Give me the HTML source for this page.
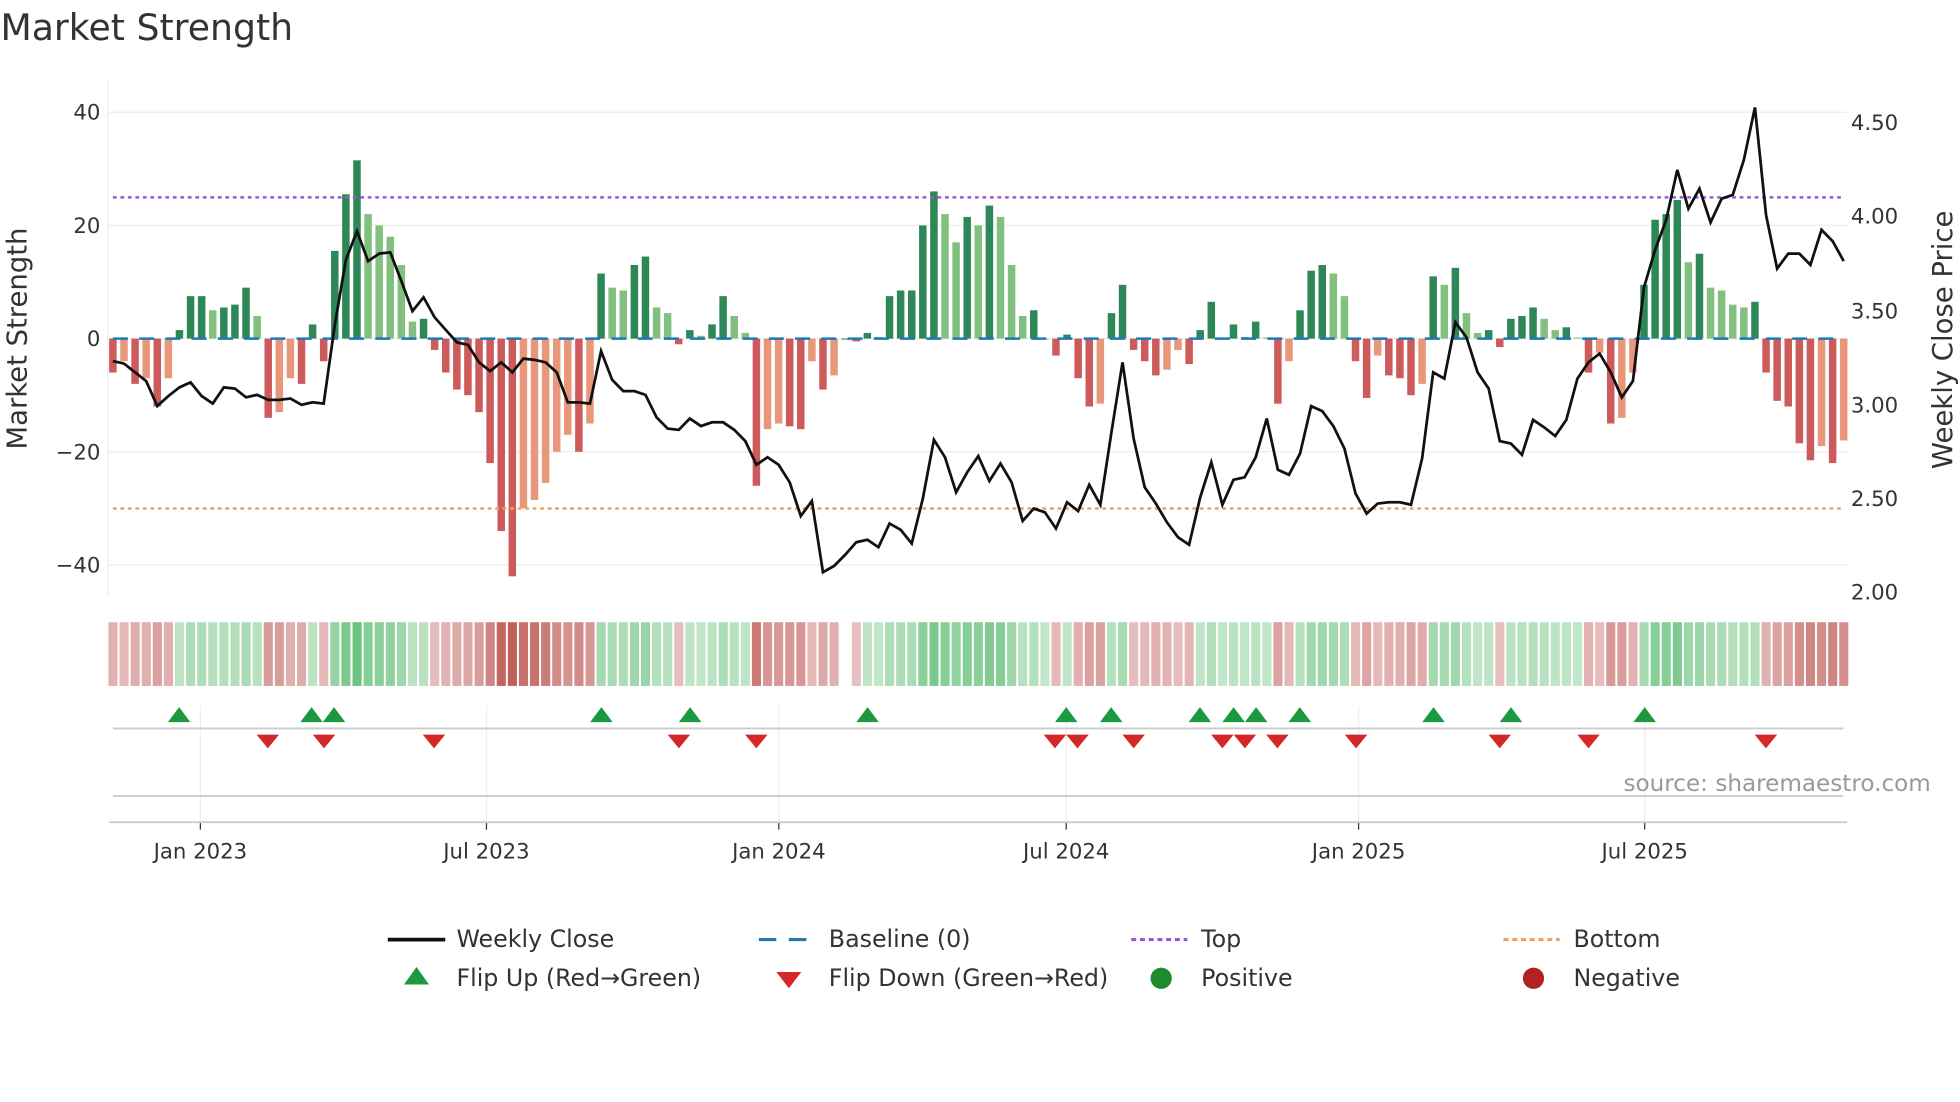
<!DOCTYPE html>
<html><head><meta charset="utf-8"><style>
html,body{margin:0;padding:0;background:#fff;}
svg{display:block;font-family:"DejaVu Sans","Liberation Sans",sans-serif;}
</style></head><body>
<svg id="s" width="1960" height="1102" viewBox="0 0 1568 882" xmlns="http://www.w3.org/2000/svg">
<text x="0" y="32" font-size="29" fill="#333">Market Strength</text>
<g id="g"></g>
<text x="1545" y="633" font-size="18.5" fill="#999" text-anchor="end">source: sharemaestro.com</text>
<text transform="translate(21,271) rotate(-90)" font-size="22" fill="#333" text-anchor="middle">Market Strength</text>
<text transform="translate(1562,272) rotate(-90)" font-size="22" fill="#333" text-anchor="middle">Weekly Close Price</text>
</svg>
<script>
const V=[-6,-4,-8,-7,-12,-7,1.5,7.5,7.5,5,5.5,6,9,4,-14,-13,-7,-8,2.5,-4,15.5,25.5,31.5,22,20,18,13,3,3.5,-2,-6,-9,-10,-13,-22,-34,-42,-30,-28.5,-25.5,-20,-17,-20,-15,11.5,9,8.5,13,14.5,5.5,4.5,-1,1.5,0.5,2.5,7.5,4,1,-26,-16,-15,-15.5,-16,-4,-9,-6.5,0,-0.5,1,0.3,7.5,8.5,8.5,20,26,22,17,21.5,20,23.5,21.5,13,4,5,0,-3,0.7,-7,-12,-11.5,4.5,9.5,-2,-4,-6.5,-5.5,-2,-4.5,1.5,6.5,0,2.5,0.3,3,0.2,-11.5,-4,5,12,13,11.5,7.5,-4,-10.5,-3,-6.5,-7,-10,-8,11,9.5,12.5,4.5,1,1.5,-1.5,3.5,4,5.5,3.5,1.5,2,0.2,-6,-2.5,-15,-14,-6,9.5,21,22,24.5,13.5,15,9,8.5,6,5.5,6.5,-6,-11,-12,-18.5,-21.5,-19,-22,-18];
const P=[289,291,298,305,325,317,310,306,317,323,310,311,318,316,320,320,319,324,322,323,260,208,185,209,203,202,225,249,238,254,264,274,276,290,297,290,298,287,288,290,298,322,322,323,281,304,313,313,316,334,343,344,335,341,338,338,344,353,372,366,372,386,413,401,458,453,444,434,432,438,419,424,435,399,352,366,394,378,365,385,371,386,417,407,410,423,402,409,388,404,346,290,351,390,403,418,430,436,398,370,404,384,382,366,335,376,380,363,325,329,341,359,395,411,403,402,402,404,367,298,303,258,270,298,311,353,355,364,336,342,349,336,303,290,283,298,318,305,230,200,176,136,167,151,178,159,156,128,86,172,215,203,203,212,184,193,209];
const X=i=>90+8.88*i, Y=v=>271-v*4.53;
let h='';
[40,20,0,-20,-40].forEach(v=>{h+=`<line x1="87" x2="1478" y1="${Y(v)}" y2="${Y(v)}" stroke="#ececec" stroke-width="1"/>`;
h+=`<text x="80" y="${Y(v)+6}" font-size="17" fill="#333" text-anchor="end">${v<0?'\u2212'+(-v):v}</text>`;});
[[4.5,98],[4,173],[3.5,249],[3,324],[2.5,399],[2,474]].forEach(a=>{h+=`<text x="1481" y="${a[1]+6}" font-size="17" fill="#333">${a[0].toFixed(2)}</text>`;});
h+=`<line x1="86" x2="86" y1="65" y2="478" stroke="#eee"/>`;
V.forEach((v,i)=>{const p=i?V[i-1]:0;let c;
 if(v>=0)c=(v>=p)?'#2e8757':'#82c07f';else c=(v<p)?'#cd5b5b':'#e8977a';
 const y0=Y(0),y1=Y(v);h+=`<rect x="${X(i)-3}" y="${Math.min(y0,y1)}" width="6" height="${Math.max(Math.abs(y1-y0),0.8)}" fill="${c}"/>`;});
h+=`<line x1="90" x2="1476" y1="271" y2="271" stroke="#1f77b4" stroke-width="2" stroke-dasharray="12,9"/>`;
h+=`<line x1="90" x2="1476" y1="158" y2="158" stroke="#9b59d0" stroke-width="2" stroke-dasharray="3,3"/>`;
h+=`<line x1="90" x2="1476" y1="407" y2="407" stroke="#f0a060" stroke-width="2" stroke-dasharray="3,3"/>`;
h+=`<polyline fill="none" stroke="#111" stroke-width="2.2" points="${P.map((y,i)=>X(i)+','+y).join(' ')}"/>`;
V.forEach((v,i)=>{if(i==66)return;const a=Math.min(Math.abs(v)/35,1);let c;
 if(v>=0){const t=0.2+a*0.8;c=`rgb(${Math.round(218-t*120)},${Math.round(240-t*50)},${Math.round(220-t*100)})`;}
 else{const t=0.15+a*0.85;c=`rgb(${Math.round(238-t*45)},${Math.round(212-t*115)},${Math.round(212-t*120)})`;}
 h+=`<rect x="${X(i)-3.6}" y="498" width="7.3" height="51" fill="${c}"/>`;});
[160,389,623,853,1087,1316].forEach(x=>{h+=`<line x1="${x}" x2="${x}" y1="565" y2="658" stroke="#eee"/><line x1="${x}" x2="${x}" y1="658" y2="664" stroke="#333"/>`;});
h+=`<line x1="90" x2="1475" y1="583" y2="583" stroke="#ccc" stroke-width="1.5"/><line x1="90" x2="1475" y1="637" y2="637" stroke="#ccc" stroke-width="1.5"/><line x1="87" x2="1478" y1="658" y2="658" stroke="#ccc" stroke-width="1.5"/>`;
[[160,'Jan 2023'],[389,'Jul 2023'],[623,'Jan 2024'],[853,'Jul 2024'],[1087,'Jan 2025'],[1316,'Jul 2025']].forEach(a=>{h+=`<text x="${a[0]}" y="687" font-size="17" fill="#333" text-anchor="middle">${a[1]}</text>`;});
const up=[143,249,267,481,552,694,853,889,960,987,1005,1040,1147,1209,1316],dn=[214,259,347,543,605,844,862,907,978,996,1022,1085,1200,1271,1413];
up.forEach(x=>{h+=`<path d="M${x-9} 578 L${x+9} 578 L${x} 566 Z" fill="#1a9a3c"/>`;});
dn.forEach(x=>{h+=`<path d="M${x-9} 588 L${x+9} 588 L${x} 599 Z" fill="#d62728"/>`;});
const lt=(x,y,t)=>`<text x="${x}" y="${y+6}" font-size="19" fill="#333">${t}</text>`;
h+=`<line x1="310" x2="356" y1="752" y2="752" stroke="#111" stroke-width="3"/>`+lt(365,752,'Weekly Close');
h+=`<line x1="607" x2="653" y1="752" y2="752" stroke="#1f77b4" stroke-width="2.5" stroke-dasharray="14,10"/>`+lt(663,752,'Baseline (0)');
h+=`<line x1="905" x2="950" y1="752" y2="752" stroke="#9b59d0" stroke-width="2.5" stroke-dasharray="4,3"/>`+lt(961,752,'Top');
h+=`<line x1="1203" x2="1248" y1="752" y2="752" stroke="#f0a060" stroke-width="2.5" stroke-dasharray="4,3"/>`+lt(1259,752,'Bottom');
h+=`<path d="M323 788 L343 788 L333 774 Z" fill="#1a9a3c"/>`+lt(365,783,'Flip Up (Red\u2192Green)');
h+=`<path d="M621 778 L641 778 L631 791 Z" fill="#d62728"/>`+lt(663,783,'Flip Down (Green\u2192Red)');
h+=`<circle cx="929" cy="783" r="8.5" fill="#1f8a2a"/>`+lt(961,783,'Positive');
h+=`<circle cx="1227" cy="783" r="8.5" fill="#b22222"/>`+lt(1259,783,'Negative');
document.getElementById('g').innerHTML=h;
</script>
</body></html>
